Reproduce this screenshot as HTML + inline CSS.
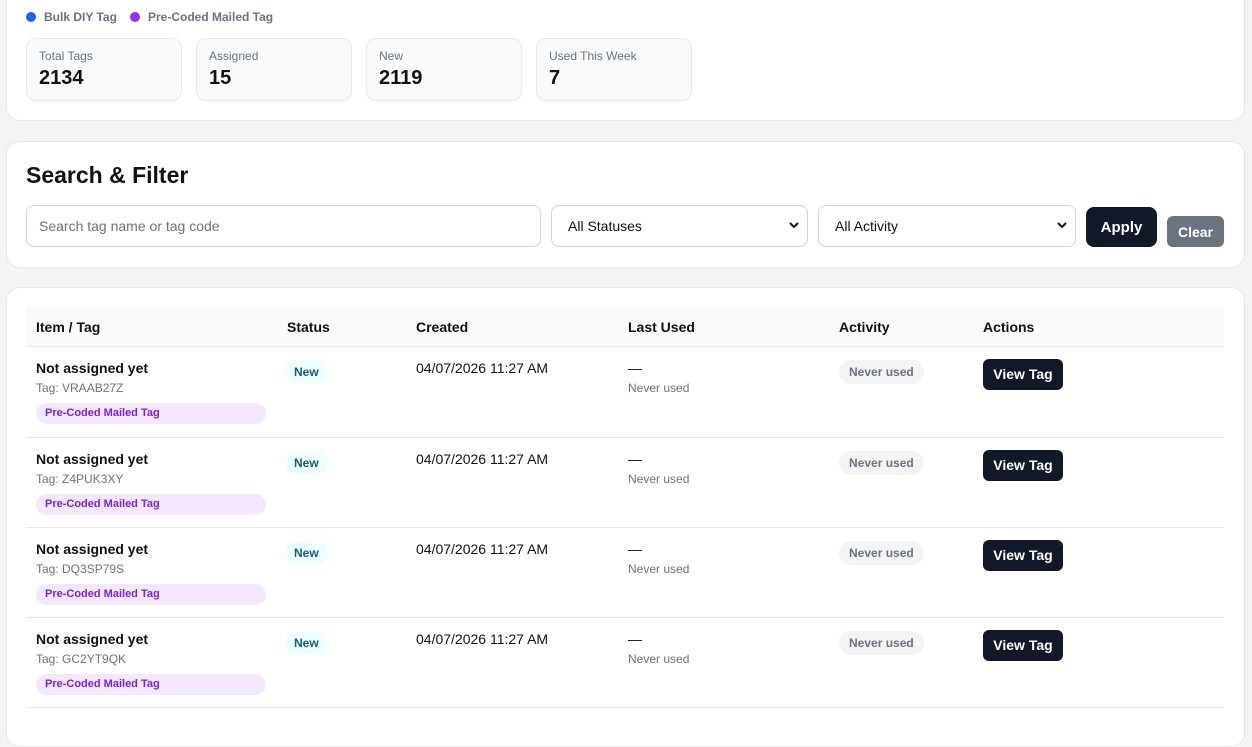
<!DOCTYPE html>
<html><head><style>
*{box-sizing:border-box;margin:0;padding:0}
body{width:1252px;height:715px;overflow:hidden;background:#f3f4f6;font-family:"Liberation Sans",Arial,sans-serif;color:#111;position:relative}
.card{position:absolute;left:6px;width:1239px;background:#fff;border:1px solid #e5e7eb;border-radius:14px}
.a{position:absolute;white-space:nowrap}
.stat{position:absolute;top:38px;width:156px;height:63px;border:1px solid #e5e7eb;border-radius:10px;background:#f9fafb}
.stat .l{position:absolute;left:12px;top:10px;font-size:12px;color:#6b7280}
.stat .v{position:absolute;left:12px;top:28px;font-size:20px;font-weight:bold;color:#111}
.field{position:absolute;top:205px;height:42px;border:1px solid #d1d5db;border-radius:8px;background:#fff;font-size:14px}
.th{position:absolute;top:319px;font-size:14px;font-weight:bold}
.row{position:absolute;left:26px;width:1198px;height:90px;border-top:1px solid #e5e7eb}
.row .n{position:absolute;left:10px;top:13px;font-size:14px;font-weight:bold}
.row .t{position:absolute;left:10px;top:34px;font-size:12px;color:#6b7280}
.row .p{position:absolute;left:10px;top:56px;width:230px;height:21px;border-radius:11px;background:#f3e8ff;color:#7e22ce;font-size:11px;font-weight:bold;padding:4px 0 0 9px}
.row .s{position:absolute;left:259px;top:13px;height:24px;padding:5px 9px 0;border-radius:12px;background:#ecfeff;color:#155e75;font-size:12px;font-weight:bold}
.row .c{position:absolute;left:390px;top:13px;font-size:14px}
.row .d{position:absolute;left:602px;top:13px;font-size:14px}
.row .e{position:absolute;left:602px;top:34px;font-size:12px;color:#6b7280}
.row .nu{position:absolute;left:813px;top:13px;height:24px;padding:5px 10px 0;border-radius:12px;background:#f3f4f6;color:#6b7280;font-size:12px;font-weight:bold}
.row .b{position:absolute;left:957px;top:12px;width:80px;height:31px;border-radius:6px;background:#111827;color:#fff;font-size:14px;font-weight:bold;text-align:center;padding-top:7px}
.chev{position:absolute;right:8px;top:15px}
</style></head><body>
<div class="card" style="top:-20px;height:141px"></div>
<span class="a" style="left:26px;top:12px;width:10px;height:10px;border-radius:50%;background:#2563eb"></span>
<span class="a" style="left:44px;top:10px;font-size:12px;font-weight:bold;color:#6b7280">Bulk DIY Tag</span>
<span class="a" style="left:130px;top:12px;width:10px;height:10px;border-radius:50%;background:#9333ea"></span>
<span class="a" style="left:148px;top:10px;font-size:12px;font-weight:bold;color:#6b7280">Pre-Coded Mailed Tag</span>
<div class="stat" style="left:26px"><span class="l">Total Tags</span><span class="v">2134</span></div>
<div class="stat" style="left:196px"><span class="l">Assigned</span><span class="v">15</span></div>
<div class="stat" style="left:366px"><span class="l">New</span><span class="v">2119</span></div>
<div class="stat" style="left:536px"><span class="l">Used This Week</span><span class="v">7</span></div>

<div class="card" style="top:141px;height:127px"></div>
<span class="a" style="left:26px;top:162px;font-size:23px;font-weight:bold">Search &amp; Filter</span>
<div class="field" style="left:26px;width:515px;color:#6b7280;padding:12px 0 0 12px">Search tag name or tag code</div>
<div class="field" style="left:551px;width:257px;padding:12px 0 0 16px">All Statuses<svg class="chev" width="10" height="8" viewBox="0 0 10 8"><path d="M1 2l4 4 4-4" fill="none" stroke="#111" stroke-width="2"/></svg></div>
<div class="field" style="left:818px;width:258px;padding:12px 0 0 16px">All Activity<svg class="chev" width="10" height="8" viewBox="0 0 10 8"><path d="M1 2l4 4 4-4" fill="none" stroke="#111" stroke-width="2"/></svg></div>
<div class="a" style="left:1086px;top:207px;width:71px;height:40px;border-radius:8px;background:#111827;color:#fff;font-size:15px;font-weight:bold;text-align:center;padding-top:12px">Apply</div>
<div class="a" style="left:1167px;top:216px;width:57px;height:31px;border-radius:6px;background:#6b7280;color:#fff;font-size:14px;font-weight:bold;text-align:center;padding-top:8px">Clear</div>

<div class="card" style="top:287px;height:460px"></div>
<div class="a" style="left:26px;top:307px;width:1198px;height:40px;background:#f9fafb;border-bottom:1px solid #e5e7eb"></div>
<span class="th" style="left:36px">Item / Tag</span>
<span class="th" style="left:287px">Status</span>
<span class="th" style="left:416px">Created</span>
<span class="th" style="left:628px">Last Used</span>
<span class="th" style="left:839px">Activity</span>
<span class="th" style="left:983px">Actions</span>

<div class="row" style="top:347px;border-top:none"><span class="n">Not assigned yet</span><span class="t">Tag: VRAAB27Z</span><span class="p">Pre-Coded Mailed Tag</span><span class="s">New</span><span class="c">04/07/2026 11:27 AM</span><span class="d">—</span><span class="e">Never used</span><span class="nu">Never used</span><span class="b">View Tag</span></div>
<div class="row" style="top:437px"><span class="n">Not assigned yet</span><span class="t">Tag: Z4PUK3XY</span><span class="p">Pre-Coded Mailed Tag</span><span class="s">New</span><span class="c">04/07/2026 11:27 AM</span><span class="d">—</span><span class="e">Never used</span><span class="nu">Never used</span><span class="b">View Tag</span></div>
<div class="row" style="top:527px"><span class="n">Not assigned yet</span><span class="t">Tag: DQ3SP79S</span><span class="p">Pre-Coded Mailed Tag</span><span class="s">New</span><span class="c">04/07/2026 11:27 AM</span><span class="d">—</span><span class="e">Never used</span><span class="nu">Never used</span><span class="b">View Tag</span></div>
<div class="row" style="top:617px"><span class="n">Not assigned yet</span><span class="t">Tag: GC2YT9QK</span><span class="p">Pre-Coded Mailed Tag</span><span class="s">New</span><span class="c">04/07/2026 11:27 AM</span><span class="d">—</span><span class="e">Never used</span><span class="nu">Never used</span><span class="b">View Tag</span></div>
<div class="a" style="left:26px;top:707px;width:1198px;border-top:1px solid #e5e7eb"></div>
</body></html>
